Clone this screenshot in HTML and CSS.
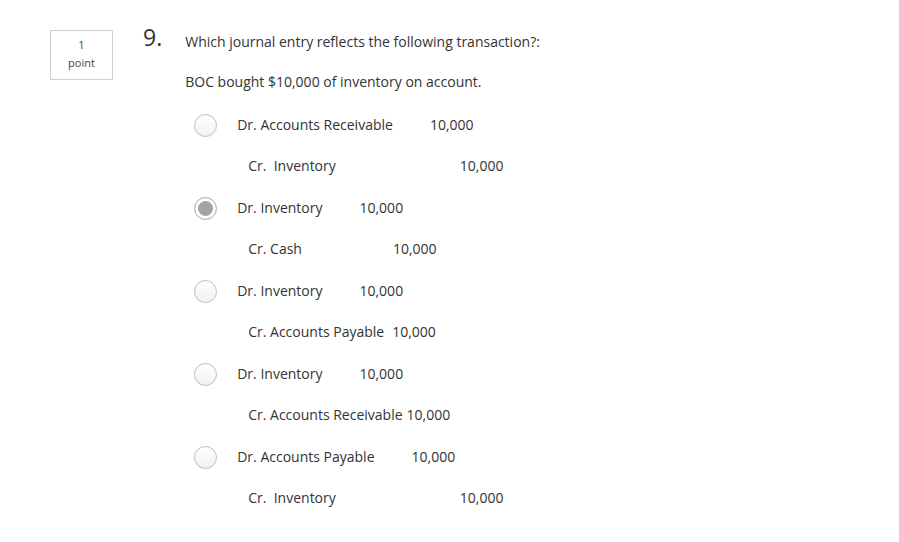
FILE: index.html
```html
<!DOCTYPE html>
<html>
<head>
<meta charset="utf-8">
<link rel="stylesheet" href="styles.css">
</head>
<body>
<div class="question">
  <div class="points"><div>1</div><div>point</div></div>
  <div class="num">9.</div>
  <div class="content">
    <p class="line">Which journal entry reflects the following transaction?:</p>
    <p class="line boc">BOC bought $10,000 of inventory on account.</p>
    <div class="options">
      <div class="option">
        <div class="dr"><span class="radio"></span><span>Dr. Accounts Receivable</span><span class="amt g37">10,000</span></div>
        <div class="cr"><span>Cr.&nbsp; Inventory</span><span class="amt g124">10,000</span></div>
      </div>
      <div class="option">
        <div class="dr"><span class="radio checked"></span><span>Dr. Inventory</span><span class="amt g37">10,000</span></div>
        <div class="cr"><span>Cr. Cash</span><span class="amt g91">10,000</span></div>
      </div>
      <div class="option">
        <div class="dr"><span class="radio"></span><span>Dr. Inventory</span><span class="amt g37">10,000</span></div>
        <div class="cr"><span>Cr. Accounts Payable</span><span class="amt g8">10,000</span></div>
      </div>
      <div class="option">
        <div class="dr"><span class="radio"></span><span>Dr. Inventory</span><span class="amt g37">10,000</span></div>
        <div class="cr"><span>Cr. Accounts Receivable</span><span class="amt g4">10,000</span></div>
      </div>
      <div class="option">
        <div class="dr"><span class="radio"></span><span>Dr. Accounts Payable</span><span class="amt g37">10,000</span></div>
        <div class="cr"><span>Cr.&nbsp; Inventory</span><span class="amt g124">10,000</span></div>
      </div>
    </div>
  </div>
</div>
</body>
</html>
```

FILE: styles.css
```css
html, body {
  margin: 0;
  padding: 0;
  background: #fff;
}
body {
  font-family: "Open Sans", "DejaVu Sans", sans-serif;
  font-size: 14px;
  color: #333;
}
.question {
  display: flex;
  align-items: flex-start;
  padding-left: 50px;
  padding-top: 24px;
}
.points {
  box-sizing: border-box;
  width: 63px;
  height: 50px;
  margin-top: 6px;
  border: 1px solid #cfcfcf;
  padding-top: 5px;
  font-size: 11px;
  line-height: 18px;
  text-align: center;
  color: #444;
}
.num {
  margin-left: 30px;
  font-size: 23px;
  line-height: 26px;
  color: #333;
}
.content {
  margin-left: 23px;
  padding-top: 8px;
}
.line {
  margin: 0;
  line-height: 20px;
}
.boc {
  margin-top: 20px;
}
.options {
  margin-top: 22px;
  margin-left: 9px;
}
.option {
  margin-bottom: 22px;
}
.dr {
  display: flex;
  align-items: center;
  height: 20px;
  margin-bottom: 21px;
}
.cr {
  display: flex;
  align-items: center;
  height: 20px;
  padding-left: 54px;
}
.radio {
  box-sizing: border-box;
  width: 23px;
  height: 23px;
  border-radius: 50%;
  border: 1px solid #bdbdbd;
  background: linear-gradient(#ffffff, #f1f1f1);
  margin-right: 20px;
  margin-top: 2px;
  flex: none;
}
.radio.checked {
  background: #a3a3a3;
  box-shadow: inset 0 0 0 3px #fff;
}
.amt { white-space: nowrap; }
.g37 { margin-left: 37px; }
.g124 { margin-left: 124px; }
.g91 { margin-left: 91px; }
.g8 { margin-left: 8px; }
.g4 { margin-left: 4px; }
```
